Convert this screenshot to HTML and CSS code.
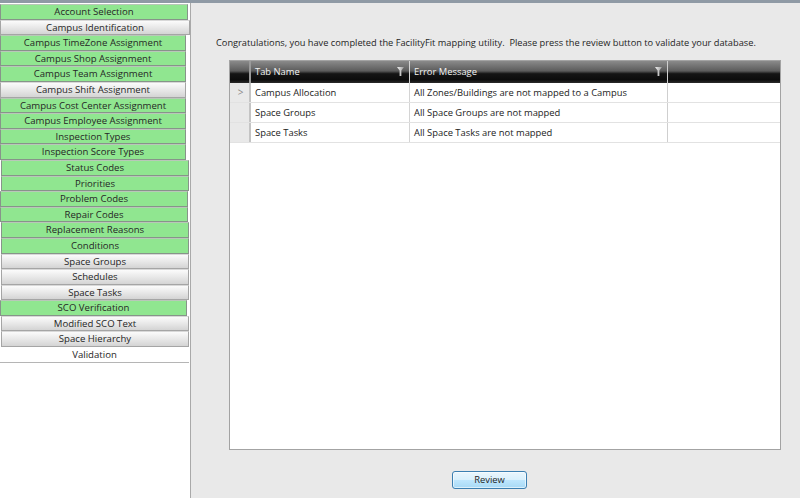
FILE: index.html
```html
<!DOCTYPE html>
<html>
<head>
<meta charset="utf-8">
<link rel="stylesheet" href="styles.css">
</head>
<body>
<div class="top-band"></div>
<div class="app">
  <nav class="sidebar">
    <div class="nav-btn green w188">Account Selection</div>
    <div class="nav-btn gray w190">Campus Identification</div>
    <div class="nav-btn green">Campus TimeZone Assignment</div>
    <div class="nav-btn green">Campus Shop Assignment</div>
    <div class="nav-btn green">Campus Team Assignment</div>
    <div class="nav-btn gray">Campus Shift Assignment</div>
    <div class="nav-btn green">Campus Cost Center Assignment</div>
    <div class="nav-btn green">Campus Employee Assignment</div>
    <div class="nav-btn green">Inspection Types</div>
    <div class="nav-btn green">Inspection Score Types</div>
    <div class="nav-btn green off1">Status Codes</div>
    <div class="nav-btn green off1">Priorities</div>
    <div class="nav-btn green w188">Problem Codes</div>
    <div class="nav-btn green w188">Repair Codes</div>
    <div class="nav-btn green off1">Replacement Reasons</div>
    <div class="nav-btn green off1">Conditions</div>
    <div class="nav-btn gray off1">Space Groups</div>
    <div class="nav-btn gray off1">Schedules</div>
    <div class="nav-btn gray off1">Space Tasks</div>
    <div class="nav-btn green w187">SCO Verification</div>
    <div class="nav-btn gray off1">Modified SCO Text</div>
    <div class="nav-btn gray off1">Space Hierarchy</div>
    <div class="nav-btn white">Validation</div>
  </nav>
  <main class="main">
    <p class="intro">Congratulations, you have completed the FacilityFit mapping utility.&nbsp; Please press the review button to validate your database.</p>
    <div class="grid">
      <div class="grid-row head">
        <div class="cell sel"></div>
        <div class="cell c1">Tab Name<svg class="filter" width="7" height="9" viewBox="0 0 7 9"><defs><linearGradient id="fg" x1="0" y1="0" x2="1" y2="0"><stop offset="0" stop-color="#f4f4f4"/><stop offset="1" stop-color="#9a9a9a"/></linearGradient></defs><path d="M0 0H7L4.4 3.6V9H2.6V3.6Z" fill="url(#fg)"/></svg></div>
        <div class="cell c2">Error Message<svg class="filter" width="7" height="9" viewBox="0 0 7 9"><path d="M0 0H7L4.4 3.6V9H2.6V3.6Z" fill="url(#fg)"/></svg></div>
        <div class="cell c3"></div>
      </div>
      <div class="grid-row">
        <div class="cell sel"><span class="arrow">&gt;</span></div>
        <div class="cell c1">Campus Allocation</div>
        <div class="cell c2">All Zones/Buildings are not mapped to a Campus</div>
        <div class="cell c3"></div>
      </div>
      <div class="grid-row">
        <div class="cell sel"></div>
        <div class="cell c1">Space Groups</div>
        <div class="cell c2">All Space Groups are not mapped</div>
        <div class="cell c3"></div>
      </div>
      <div class="grid-row">
        <div class="cell sel"></div>
        <div class="cell c1">Space Tasks</div>
        <div class="cell c2">All Space Tasks are not mapped</div>
        <div class="cell c3"></div>
      </div>
    </div>
    <div class="actions">
      <button class="review">Review</button>
    </div>
  </main>
</div>
</body>
</html>
```

FILE: styles.css
```css
* { box-sizing: border-box; }
html, body {
  margin: 0;
  padding: 0;
  width: 800px;
  height: 498px;
  overflow: hidden;
  font-family: "Open Sans", "Noto Sans", sans-serif;
  color: #1c1c1c;
}
.top-band {
  height: 3px;
  background: #8f9aa5;
}
.app {
  display: flex;
  height: 495px;
}
.sidebar {
  width: 190px;
  flex: none;
  background: #fff;
  display: flex;
  flex-direction: column;
  padding-top: 1px;
}
.nav-btn {
  height: 15.6px;
  width: 186px;
  font-size: 9.6px;
  line-height: 13.5px;
  text-align: center;
  border: 1px solid #87948a;
  border-top-color: #b9c7b9;
  white-space: nowrap;
  color: #262626;
}
.nav-btn.green { background: #90e690; }
.nav-btn.gray {
  background: linear-gradient(#fbfbfb, #e6e6e6 55%, #d4d4d4);
  border-color: #a5a5a5;
  border-top-color: #d8d8d8;
}
.nav-btn.white {
  background: #fff;
  width: 189px;
  border: none;
  border-bottom: 1px solid #b5b5b5;
  line-height: 16px;
}
.nav-btn.w188 { width: 188px; }
.nav-btn.w187 { width: 187px; }
.nav-btn.w190 { width: 190px; }
.nav-btn.off1 { margin-left: 1px; width: 188px; }
.main {
  flex: 1;
  background: #e9e9e9;
  border-left: 1px solid #a9a9a9;
  padding: 33px 19px 0 25px;
  display: flex;
  flex-direction: column;
}
.intro {
  margin: 0;
  font-size: 9.25px;
  line-height: 14px;
  color: #1e1e1e;
  white-space: nowrap;
}
.grid {
  margin: 10px 0 0 13px;
  height: 390px;
  background: #fff;
  border: 1px solid #a3a3a3;
  display: flex;
  flex-direction: column;
}
.grid-row {
  display: flex;
  height: 20px;
  border-bottom: 1px solid #e2e2e2;
}
.grid-row.head {
  height: 22px;
  border-bottom: none;
  background: linear-gradient(#8a8a8a, #5c5c5c 45%, #141414 58%, #0c0c0c 85%, #2a2a2a);
}
.cell {
  font-size: 9.4px;
  line-height: 19px;
  padding-left: 4px;
  color: #222;
  white-space: nowrap;
  position: relative;
}
.head .cell {
  color: #f2f2f2;
  line-height: 22px;
  border-right: 1px solid #8c8c8c;
}
.cell.sel {
  width: 21px;
  flex: none;
  background: #e9e9e9;
  border-right: 2px solid #c4c4c4;
  padding-left: 0;
  text-align: center;
}
.head .cell.sel {
  background: transparent;
  border-right: 2px solid #9a9a9a;
}
.arrow {
  color: #8a8a8a;
  font-size: 10px;
  margin-left: 2px;
}
.cell.c1 { width: 159px; flex: none; border-right: 1px solid #d4d4d4; }
.cell.c2 { width: 258px; flex: none; border-right: 1px solid #cfcfcf; }
.cell.c3 { flex: 1; }
.head .cell.c3 { border-right: none; }
.filter {
  position: absolute;
  right: 5px;
  top: 6px;
}
.actions {
  padding: 16px 0 0 236px;
}
.review {
  width: 75px;
  height: 18px;
  padding: 0;
  font-family: "Open Sans", "Noto Sans", sans-serif;
  font-size: 9.4px;
  color: #1e1e1e;
  border: 1px solid #3c7fb1;
  border-radius: 3px;
  background: linear-gradient(#eaf6fd, #d9f0fc 50%, #bee6fd 52%, #a7d9f5);
  box-shadow: inset 0 0 0 1px rgba(255,255,255,0.6);
}
```
